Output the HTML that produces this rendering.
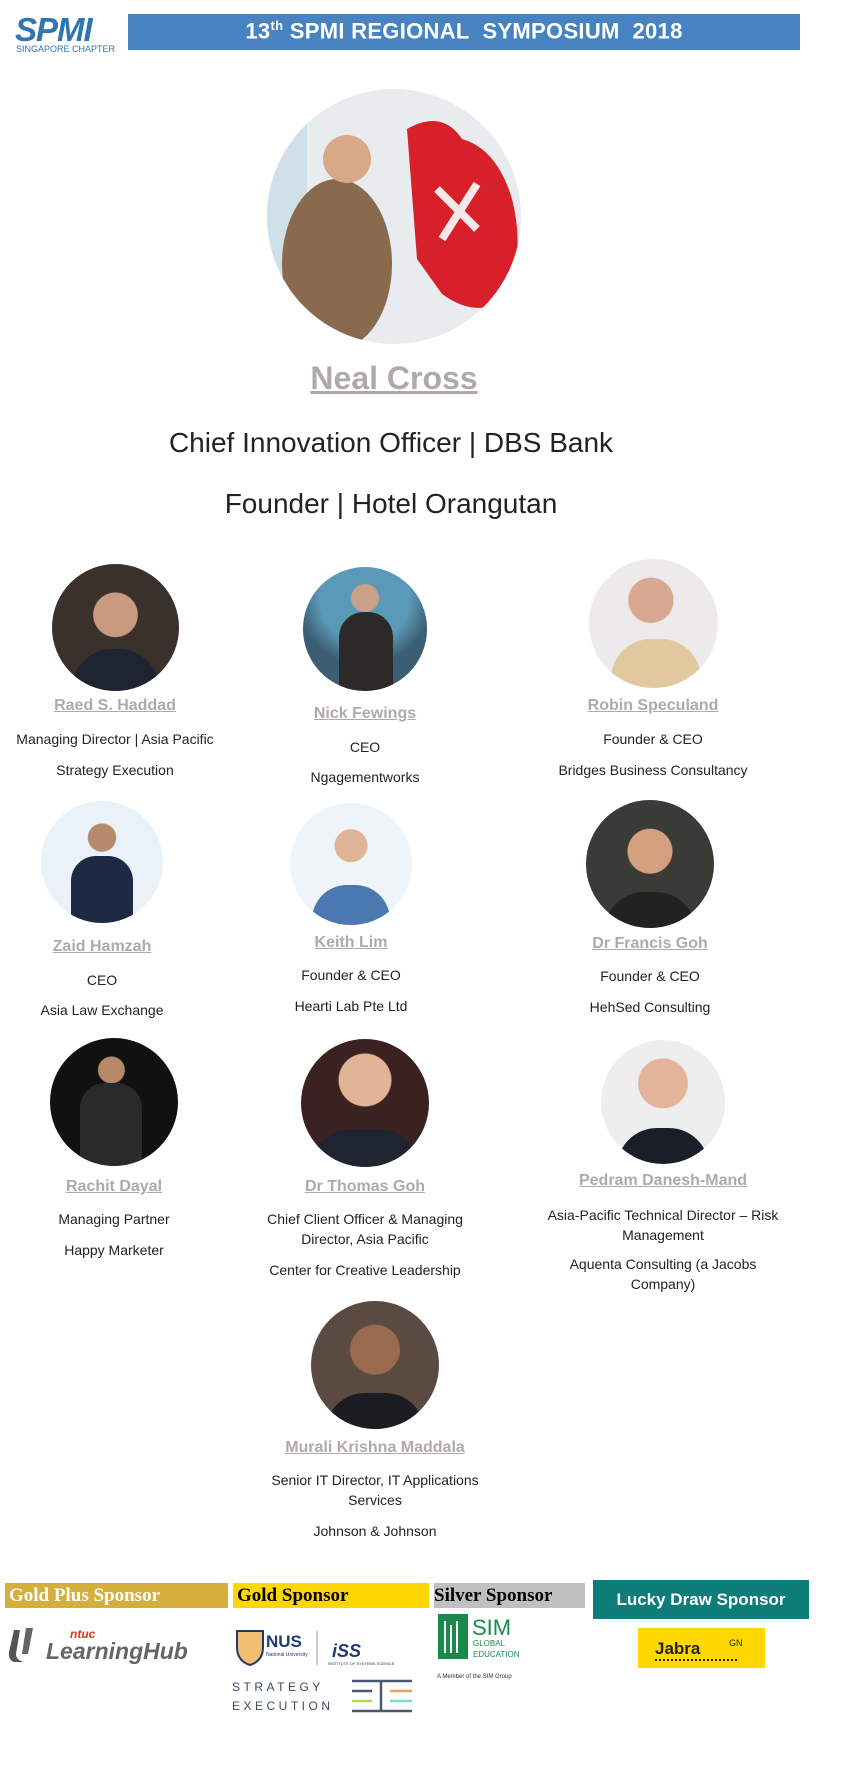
<!DOCTYPE html>
<html><head><meta charset="utf-8"><style>
*{margin:0;padding:0;box-sizing:border-box}
body{width:852px;height:1768px;background:#fff;position:relative;font-family:"Liberation Sans",Arial,sans-serif;overflow:hidden;color:#222}
.a{position:absolute}
.p{overflow:hidden}
.c{position:absolute;text-align:center;transform:translateX(-50%)}
.nm{font-weight:bold;font-size:16px;color:#b1a9a9;text-decoration:underline;white-space:nowrap}
.t{font-size:14px;color:#222;line-height:20px}
.sp{position:absolute;font-family:"Liberation Serif",serif;font-weight:bold;font-size:19px;line-height:25px;padding-left:4px;white-space:nowrap}
</style></head><body>

<div class="a" style="left:15px;top:14px;width:108px;height:40px">
<svg width="108" height="40" viewBox="0 0 108 40">
<text x="0" y="27" font-family="Liberation Sans" font-weight="bold" font-style="italic" font-size="33" fill="#2f74b5" letter-spacing="-1">SPMI</text>
<text x="1" y="38" font-family="Liberation Sans" font-size="9" fill="#2f74b5">SINGAPORE CHAPTER</text>
</svg></div>
<div class="a" style="left:128px;top:14px;width:672px;height:36px;background:#4683c0"></div>
<div class="c" style="left:464px;top:18px;color:#fff;font-weight:bold;font-size:22px;white-space:nowrap;letter-spacing:0.3px">13<sup style="font-size:13px">th</sup> SPMI REGIONAL&nbsp; SYMPOSIUM&nbsp; 2018</div>

<div class="a p" style="left:267px;top:89px;width:254px;height:255px;border-radius:50%;background:#e8ecee">
<svg width="254" height="255">
<rect x="0" y="0" width="40" height="255" fill="#cfe0e8"/>
<path d="M140 40 Q175 20 195 50 Q230 60 245 110 Q260 170 235 210 Q210 230 175 205 L150 170 Z" fill="#d8202a"/>
<path d="M170 100 L210 140 M210 95 L175 150" stroke="#f4e8e8" stroke-width="8"/>
<ellipse cx="70" cy="175" rx="55" ry="85" fill="#8a6a4f"/>
<circle cx="80" cy="70" r="24" fill="#d8a888"/>
</svg></div>
<div class="c" style="left:394px;top:360px;font-weight:bold;font-size:32px;color:#b1a9a9;text-decoration:underline;white-space:nowrap">Neal Cross</div>
<div class="c" style="left:391px;top:427px;font-size:28px;white-space:nowrap">Chief Innovation Officer | DBS Bank</div>
<div class="c" style="left:391px;top:488px;font-size:28px;white-space:nowrap">Founder | Hotel Orangutan</div>

<div class="a p" style="left:52px;top:564px;width:127px;height:127px;border-radius:50%;background:radial-gradient(circle at 50% 40%,#c89a80 0 22%,#3a302c 23%)"><div class="a" style="left:20px;top:85px;width:87px;height:45px;background:#1e2430;border-radius:40px 40px 0 0"></div></div>
<div class="a p" style="left:303px;top:567px;width:124px;height:124px;border-radius:50%;background:radial-gradient(circle at 50% 25%,#c9a08a 0 12%,#5a9ab8 13% 40%,#3c5e74 60%)"><div class="a" style="left:36px;top:45px;width:54px;height:80px;background:#2c2a28;border-radius:25px 25px 0 0"></div></div>
<div class="a p" style="left:589px;top:559px;width:129px;height:129px;border-radius:50%;background:radial-gradient(circle at 48% 32%,#d8a890 0 20%,#eceaea 21%)"><div class="a" style="left:22px;top:80px;width:90px;height:55px;background:#e2c89e;border-radius:40px 40px 0 0"></div></div>

<div class="c nm" style="left:115px;top:697px">Raed S. Haddad</div>
<div class="c t" style="left:115px;top:729px;width:230px">Managing Director | Asia Pacific</div>
<div class="c t" style="left:115px;top:760px;width:230px">Strategy Execution</div>
<div class="c nm" style="left:365px;top:705px">Nick Fewings</div>
<div class="c t" style="left:365px;top:737px;width:220px">CEO</div>
<div class="c t" style="left:365px;top:767px;width:220px">Ngagementworks</div>
<div class="c nm" style="left:653px;top:697px">Robin Speculand</div>
<div class="c t" style="left:653px;top:729px;width:240px">Founder &amp; CEO</div>
<div class="c t" style="left:653px;top:760px;width:240px">Bridges Business Consultancy</div>

<div class="a p" style="left:41px;top:801px;width:122px;height:122px;border-radius:50%;background:radial-gradient(circle at 50% 30%,#b88a6c 0 13%,#e8f2f8 14%)"><div class="a" style="left:30px;top:55px;width:62px;height:70px;background:#1e2a44;border-radius:25px 25px 0 0"></div></div>
<div class="a p" style="left:290px;top:803px;width:122px;height:122px;border-radius:50%;background:radial-gradient(circle at 50% 35%,#e0b496 0 16%,#eef4f8 17%)"><div class="a" style="left:22px;top:82px;width:78px;height:45px;background:#4a78b0;border-radius:35px 35px 0 0"></div></div>
<div class="a p" style="left:586px;top:800px;width:128px;height:128px;border-radius:50%;background:radial-gradient(circle at 50% 40%,#d4a080 0 22%,#3a3a36 23%)"><div class="a" style="left:18px;top:92px;width:92px;height:40px;background:#222;border-radius:40px 40px 0 0"></div></div>

<div class="c nm" style="left:102px;top:938px">Zaid Hamzah</div>
<div class="c t" style="left:102px;top:970px;width:220px">CEO</div>
<div class="c t" style="left:102px;top:1000px;width:220px">Asia Law Exchange</div>
<div class="c nm" style="left:351px;top:934px">Keith Lim</div>
<div class="c t" style="left:351px;top:965px;width:220px">Founder &amp; CEO</div>
<div class="c t" style="left:351px;top:996px;width:220px">Hearti Lab Pte Ltd</div>
<div class="c nm" style="left:650px;top:935px">Dr Francis Goh</div>
<div class="c t" style="left:650px;top:966px;width:220px">Founder &amp; CEO</div>
<div class="c t" style="left:650px;top:997px;width:220px">HehSed Consulting</div>

<div class="a p" style="left:50px;top:1038px;width:128px;height:128px;border-radius:50%;background:radial-gradient(circle at 48% 25%,#b88a6c 0 11%,#111 12%)"><div class="a" style="left:30px;top:45px;width:62px;height:85px;background:#2a2a2a;border-radius:25px 25px 0 0"></div></div>
<div class="a p" style="left:301px;top:1039px;width:128px;height:128px;border-radius:50%;background:radial-gradient(circle at 50% 32%,#e0b494 0 24%,#3a2220 25%)"><div class="a" style="left:10px;top:90px;width:108px;height:40px;background:#1e2430;border-radius:40px 40px 0 0"></div></div>
<div class="a p" style="left:601px;top:1040px;width:124px;height:124px;border-radius:50%;background:radial-gradient(circle at 50% 35%,#e2b49a 0 24%,#eeeeee 25%)"><div class="a" style="left:16px;top:88px;width:92px;height:40px;background:#1a1e28;border-radius:40px 40px 0 0"></div></div>

<div class="c nm" style="left:114px;top:1178px">Rachit Dayal</div>
<div class="c t" style="left:114px;top:1209px;width:220px">Managing Partner</div>
<div class="c t" style="left:114px;top:1240px;width:220px">Happy Marketer</div>
<div class="c nm" style="left:365px;top:1178px">Dr Thomas Goh</div>
<div class="c t" style="left:365px;top:1209px;width:215px">Chief Client Officer &amp; Managing Director, Asia Pacific</div>
<div class="c t" style="left:365px;top:1260px;width:215px">Center for Creative Leadership</div>
<div class="c nm" style="left:663px;top:1172px">Pedram Danesh-Mand</div>
<div class="c t" style="left:663px;top:1205px;width:250px">Asia-Pacific Technical Director – Risk Management</div>
<div class="c t" style="left:663px;top:1254px;width:250px">Aquenta Consulting (a Jacobs Company)</div>

<div class="a p" style="left:311px;top:1301px;width:128px;height:128px;border-radius:50%;background:radial-gradient(circle at 50% 38%,#9a6a4e 0 24%,#5a4a42 25%)"><div class="a" style="left:14px;top:92px;width:100px;height:40px;background:#1c1c22;border-radius:40px 40px 0 0"></div></div>
<div class="c nm" style="left:375px;top:1439px">Murali Krishna Maddala</div>
<div class="c t" style="left:375px;top:1470px;width:220px">Senior IT Director, IT Applications Services</div>
<div class="c t" style="left:375px;top:1521px;width:220px">Johnson &amp; Johnson</div>

<div class="sp" style="left:5px;top:1583px;width:223px;height:25px;background:#d4af3b;color:#fff">Gold Plus Sponsor</div>
<div class="sp" style="left:233px;top:1583px;width:196px;height:25px;background:#ffd700;color:#000">Gold Sponsor</div>
<div class="sp" style="left:434px;top:1583px;width:151px;height:25px;background:#c0c0c0;color:#000;padding-left:0">Silver Sponsor</div>
<div class="a" style="left:593px;top:1580px;width:216px;height:39px;background:#0e7c78;color:#fff;font-weight:bold;font-size:17px;line-height:39px;text-align:center">Lucky Draw Sponsor</div>

<div class="a" style="left:6px;top:1624px;width:185px;height:40px">
<svg width="185" height="40"><path d="M8 6 L14 6 L10 30 Q10 36 18 38 L8 38 Q2 36 3 28 Z" fill="#555"/><path d="M20 4 L27 4 L22 30 L16 30 Z" fill="#666"/>
<text x="64" y="14" font-family="Liberation Sans" font-weight="bold" font-style="italic" font-size="12" fill="#d23a1e">ntuc</text>
<text x="40" y="35" font-family="Liberation Sans" font-weight="bold" font-style="italic" font-size="23" fill="#666">LearningHub</text></svg></div>
<div class="a" style="left:235px;top:1627px;width:160px;height:40px">
<svg width="160" height="40"><path d="M2 4 H28 V20 Q28 34 15 38 Q2 34 2 20 Z" fill="#f0c070" stroke="#1f3a6e" stroke-width="2"/>
<text x="31" y="20" font-family="Liberation Sans" font-weight="bold" font-size="17" fill="#1f3a6e">NUS</text>
<text x="31" y="29" font-family="Liberation Sans" font-size="5" fill="#1f3a6e">National University</text>
<line x1="82" y1="4" x2="82" y2="38" stroke="#999"/>
<text x="97" y="30" font-family="Liberation Sans" font-weight="bold" font-style="italic" font-size="18" fill="#1f3a6e">iSS</text>
<text x="93" y="38" font-family="Liberation Sans" font-size="4" fill="#1f3a6e">INSTITUTE OF SYSTEMS SCIENCE</text></svg></div>
<div class="a" style="left:232px;top:1679px;width:180px;height:34px">
<svg width="180" height="34"><text x="0" y="12" font-family="Liberation Sans" font-size="12" letter-spacing="3.5" fill="#3a4a5e">STRATEGY</text>
<text x="0" y="31" font-family="Liberation Sans" font-size="12" letter-spacing="3.5" fill="#3a4a5e">EXECUTION</text>
<g stroke-width="2.5"><line x1="120" y1="2" x2="180" y2="2" stroke="#4a5870"/><line x1="120" y1="12" x2="140" y2="12" stroke="#4a5870"/><line x1="158" y1="12" x2="180" y2="12" stroke="#f0a060"/><line x1="120" y1="22" x2="140" y2="22" stroke="#b8d84a"/><line x1="158" y1="22" x2="180" y2="22" stroke="#80dcc8"/><line x1="120" y1="32" x2="180" y2="32" stroke="#4a5870"/><line x1="149" y1="2" x2="149" y2="32" stroke="#4a5870"/></g></svg></div>
<div class="a" style="left:437px;top:1613px;width:95px;height:70px">
<svg width="95" height="70"><rect x="1" y="1" width="30" height="45" fill="#1a8a4a"/><path d="M8 8 L8 40 M14 12 L14 40 M20 8 L20 40" stroke="#fff" stroke-width="2"/>
<text x="35" y="22" font-family="Liberation Sans" font-size="22" fill="#1a8a4a">SIM</text>
<text x="36" y="33" font-family="Liberation Sans" font-size="8" fill="#1a8a4a">GLOBAL</text>
<text x="36" y="44" font-family="Liberation Sans" font-size="8" fill="#1a8a4a">EDUCATION</text>
<text x="0" y="65" font-family="Liberation Sans" font-size="6" fill="#333">A Member of the SIM Group</text></svg></div>
<div class="a" style="left:638px;top:1628px;width:127px;height:40px;background:#ffd800">
<svg width="127" height="40"><text x="17" y="26" font-family="Liberation Sans" font-weight="bold" font-size="17" fill="#222">Jabra</text><text x="91" y="18" font-family="Liberation Sans" font-size="9" fill="#222">GN</text><line x1="17" y1="32" x2="100" y2="32" stroke="#222" stroke-width="2" stroke-dasharray="2 2"/></svg></div>

</body></html>
